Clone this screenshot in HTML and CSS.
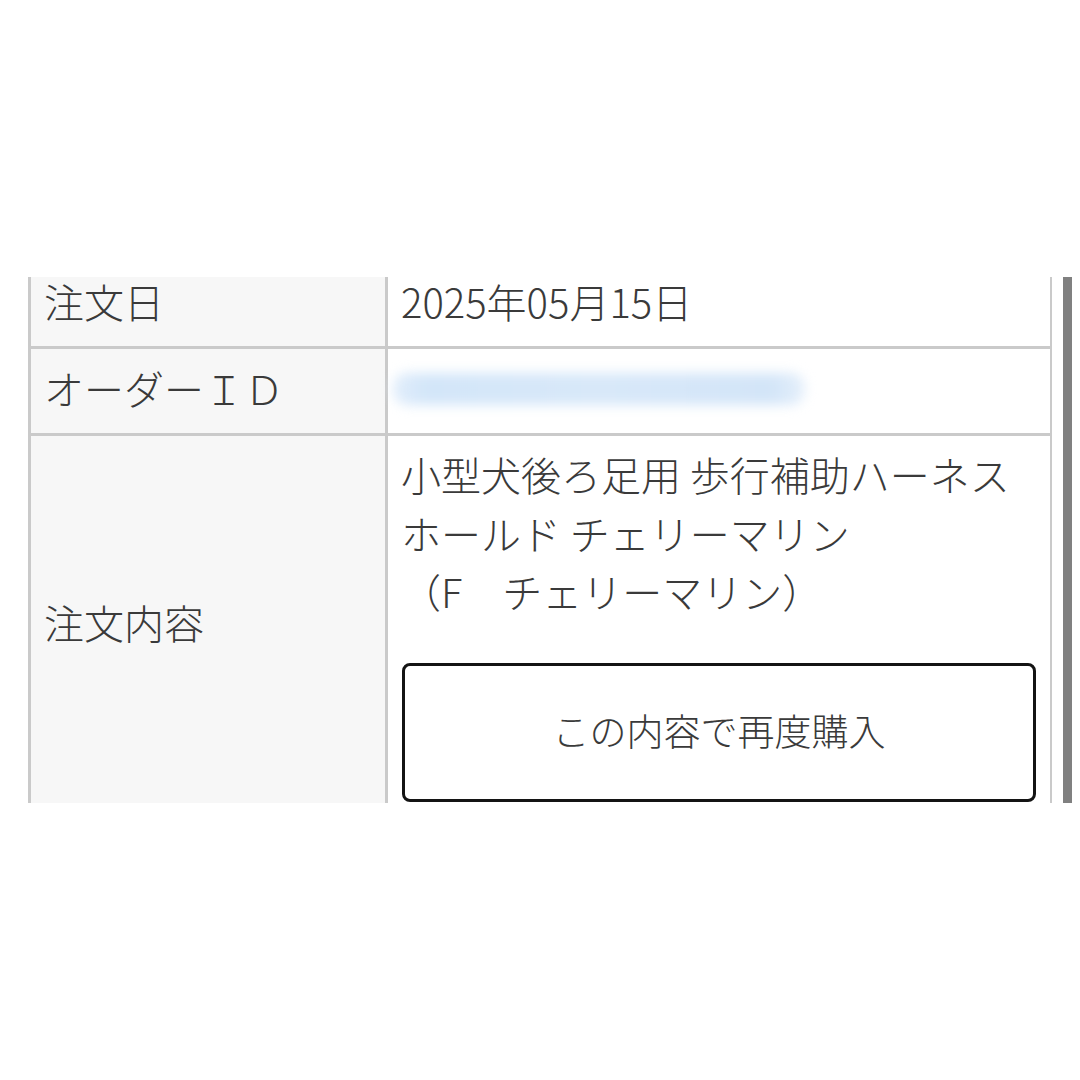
FILE: index.html
```html
<!DOCTYPE html>
<html lang="ja">

<head>
  <meta charset="utf-8">
  <title>注文履歴</title>
  <link rel="stylesheet" href="styles.css">
</head>

<body>
  <div class="panel">
    <div class="scroll-area">
      <dl class="order-list">
        <dt class="row-first">注文日</dt>
        <dd class="row-first">2025年05月15日</dd>

        <dt class="row-short">オーダーＩＤ</dt>
        <dd class="row-short"><span class="masked"></span></dd>

        <dt class="row-tall">注文内容</dt>
        <dd class="row-tall">
          <p class="item-name">小型犬後ろ足用 歩行補助ハーネス<br>ホールド チェリーマリン<br>（F　チェリーマリン）</p>
          <button type="button" class="btn-rebuy">この内容で再度購入</button>
        </dd>
      </dl>
    </div>
    <div class="scrollbar"></div>
  </div>
</body>

</html>
```

FILE: styles.css
```css
html,
body {
  margin: 0;
  padding: 0;
  background: #fff;
}

body {
  font-family: "Noto Sans CJK JP", "Noto Sans", sans-serif;
  color: #3a3a3a;
}

.panel {
  display: flex;
  margin: 270px 0 0 28px;
  height: 533px;
}

/* 上はスクロールで隠れている */
.scroll-area {
  width: 1024px;
  padding-top: 7px;
  overflow: hidden;
}

.scrollbar {
  width: 9px;
  margin: 7px 0 0 11px;
  background: #808080;
}

.order-list {
  display: grid;
  grid-template-columns: 354px 1fr;
  gap: 3px;
  width: 1024px;
  margin: 0;
  padding: 0 3px 3px;
  box-sizing: border-box;
  background: #cacaca;
}

.order-list dt,
.order-list dd {
  margin: 0;
  padding: 0 14px 0 13px;
  font-size: 40px;
  font-weight: 300;
  line-height: 44px;
}

.order-list dt {
  background: #f7f7f7;
}

.order-list dd {
  background: #fff;
}

.row-first {
  height: 69px;
  padding-top: 2px !important;
  box-sizing: border-box;
}

.row-short {
  display: flex;
  align-items: center;
  height: 84px;
  padding-bottom: 6px !important;
  box-sizing: border-box;
}

dd.row-short {
  padding-bottom: 4px !important;
}

dt.row-tall {
  display: flex;
  align-items: center;
  padding-bottom: 6px !important;
}

dd.row-tall {
  padding: 9px 14px 12px 13px;
}

.masked {
  display: inline-block;
  width: 412px;
  height: 32px;
  margin-left: -8px;
  background: linear-gradient(90deg, #e2eefb, #d3e6f9 8%, #d8e8f9 50%, #d3e5f8 92%, #e6f0fb);
  border-radius: 14px;
  filter: blur(6px);
}

.item-name {
  margin: 0 0 42px;
  font-size: 40px;
  line-height: 58.5px;
}

.btn-rebuy {
  display: block;
  width: 634px;
  height: 139px;
  margin-left: 1px;
  padding-bottom: 6px;
  border: 3px solid #141414;
  border-radius: 8px;
  background: #fff;
  color: #3a3a3a;
  font-family: "Noto Sans CJK JP", "Noto Sans", sans-serif;
  font-size: 37px;
  font-weight: 300;
  cursor: pointer;
}
```
